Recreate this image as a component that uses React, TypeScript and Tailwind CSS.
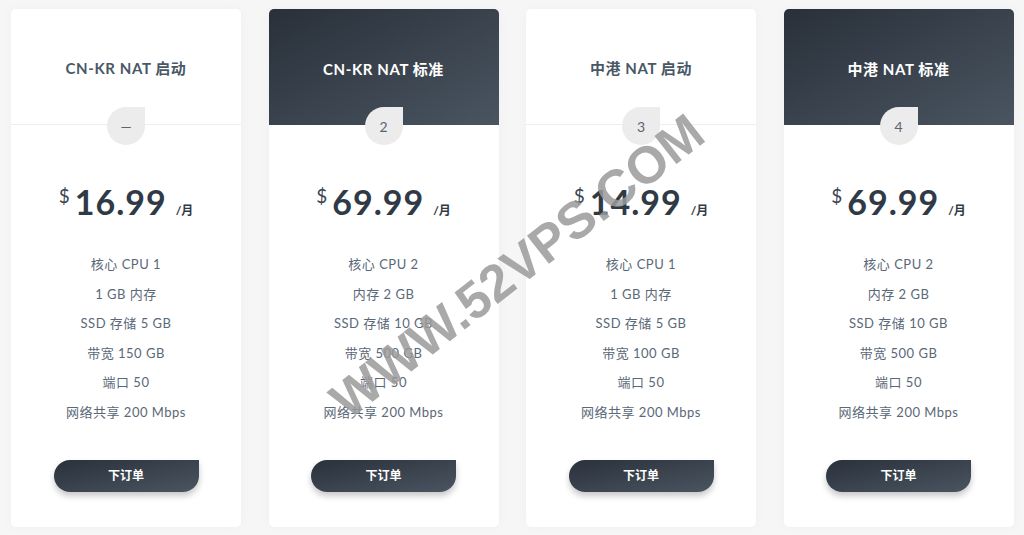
import React from "react";

interface Plan {
  title: string;
  badge: string;
  price: string;
  dark: boolean;
  features: string[];
}

const plans: Plan[] = [
  {
    title: "CN-KR NAT 启动",
    badge: "—",
    price: "16.99",
    dark: false,
    features: ["核心 CPU 1", "1 GB 内存", "SSD 存储 5 GB", "带宽 150 GB", "端口 50", "网络共享 200 Mbps"],
  },
  {
    title: "CN-KR NAT 标准",
    badge: "2",
    price: "69.99",
    dark: true,
    features: ["核心 CPU 2", "内存 2 GB", "SSD 存储 10 GB", "带宽 500 GB", "端口 50", "网络共享 200 Mbps"],
  },
  {
    title: "中港 NAT 启动",
    badge: "3",
    price: "14.99",
    dark: false,
    features: ["核心 CPU 1", "1 GB 内存", "SSD 存储 5 GB", "带宽 100 GB", "端口 50", "网络共享 200 Mbps"],
  },
  {
    title: "中港 NAT 标准",
    badge: "4",
    price: "69.99",
    dark: true,
    features: ["核心 CPU 2", "内存 2 GB", "SSD 存储 10 GB", "带宽 500 GB", "端口 50", "网络共享 200 Mbps"],
  },
];

function PlanCard({ plan }: { plan: Plan }) {
  return (
    <div className="w-[230px] h-[518px] bg-white rounded-[5px] shadow-[0_0_12px_rgba(0,0,0,0.03)] flex flex-col items-center overflow-hidden">
      <div
        className={
          plan.dark
            ? "relative w-full h-[116px] shrink-0 flex items-center justify-center bg-gradient-to-br from-[#29303a] to-[#4a5561]"
            : "relative w-full h-[116px] shrink-0 flex items-center justify-center border-b border-[#eeeeee]"
        }
      >
        <h3
          className={
            plan.dark
              ? "text-[15px] font-bold tracking-[0.6px] text-white mt-[4px]"
              : "text-[15px] font-bold tracking-[0.6px] text-[#4a5866] mt-[4px]"
          }
        >
          {plan.title}
        </h3>
        <div className="absolute left-1/2 -translate-x-1/2 top-[98px] w-[38px] h-[38px] rounded-full rounded-tr-none bg-[#ececec] flex items-center justify-center text-[14px] text-[#5b6570]">
          {plan.badge}
        </div>
      </div>

      <div className="mt-[60px] flex items-start text-[#2f3a46]">
        <span className="text-[19px] leading-none mt-[1px] mr-[5px] text-[#3a4551]">$</span>
        <span className="text-[34px] leading-none font-bold tracking-[1px]">{plan.price}</span>
        <span className="text-[12px] font-bold leading-none mt-[20px] ml-[9px]">/月</span>
      </div>

      <ul className="mt-[37px] flex flex-col items-center gap-[12.6px] text-[13px] leading-[17px] text-[#5a6878] tracking-[0.5px]">
        {plan.features.map((f) => (
          <li key={f}>{f}</li>
        ))}
      </ul>

      <button className="mt-[39px] w-[145px] h-[32px] rounded-[16px] rounded-tr-none bg-gradient-to-br from-[#2a313b] to-[#4a5561] text-white text-[12px] font-bold shadow-[0_4px_6px_rgba(0,0,0,0.22)]">
        下订单
      </button>
    </div>
  );
}

export default function App() {
  return (
    <div
      className="relative w-[1024px] h-[535px] bg-[#f6f6f6] overflow-hidden"
      style={{ fontFamily: 'Lato, "Noto Sans CJK SC", sans-serif' }}
    >
      <div className="flex gap-[27.5px] pl-[11px] pt-[9px]">
        {plans.map((p) => (
          <PlanCard key={p.title} plan={p} />
        ))}
      </div>
      <div
        className="absolute left-[517px] top-[266px] -translate-x-1/2 -translate-y-1/2 -rotate-[38deg] whitespace-nowrap text-[52px] font-bold text-[#9a9a9a]/85 pointer-events-none"
        style={{ fontFamily: '"Liberation Sans", sans-serif' }}
      >
        WWW.52VPS.COM
      </div>
    </div>
  );
}
